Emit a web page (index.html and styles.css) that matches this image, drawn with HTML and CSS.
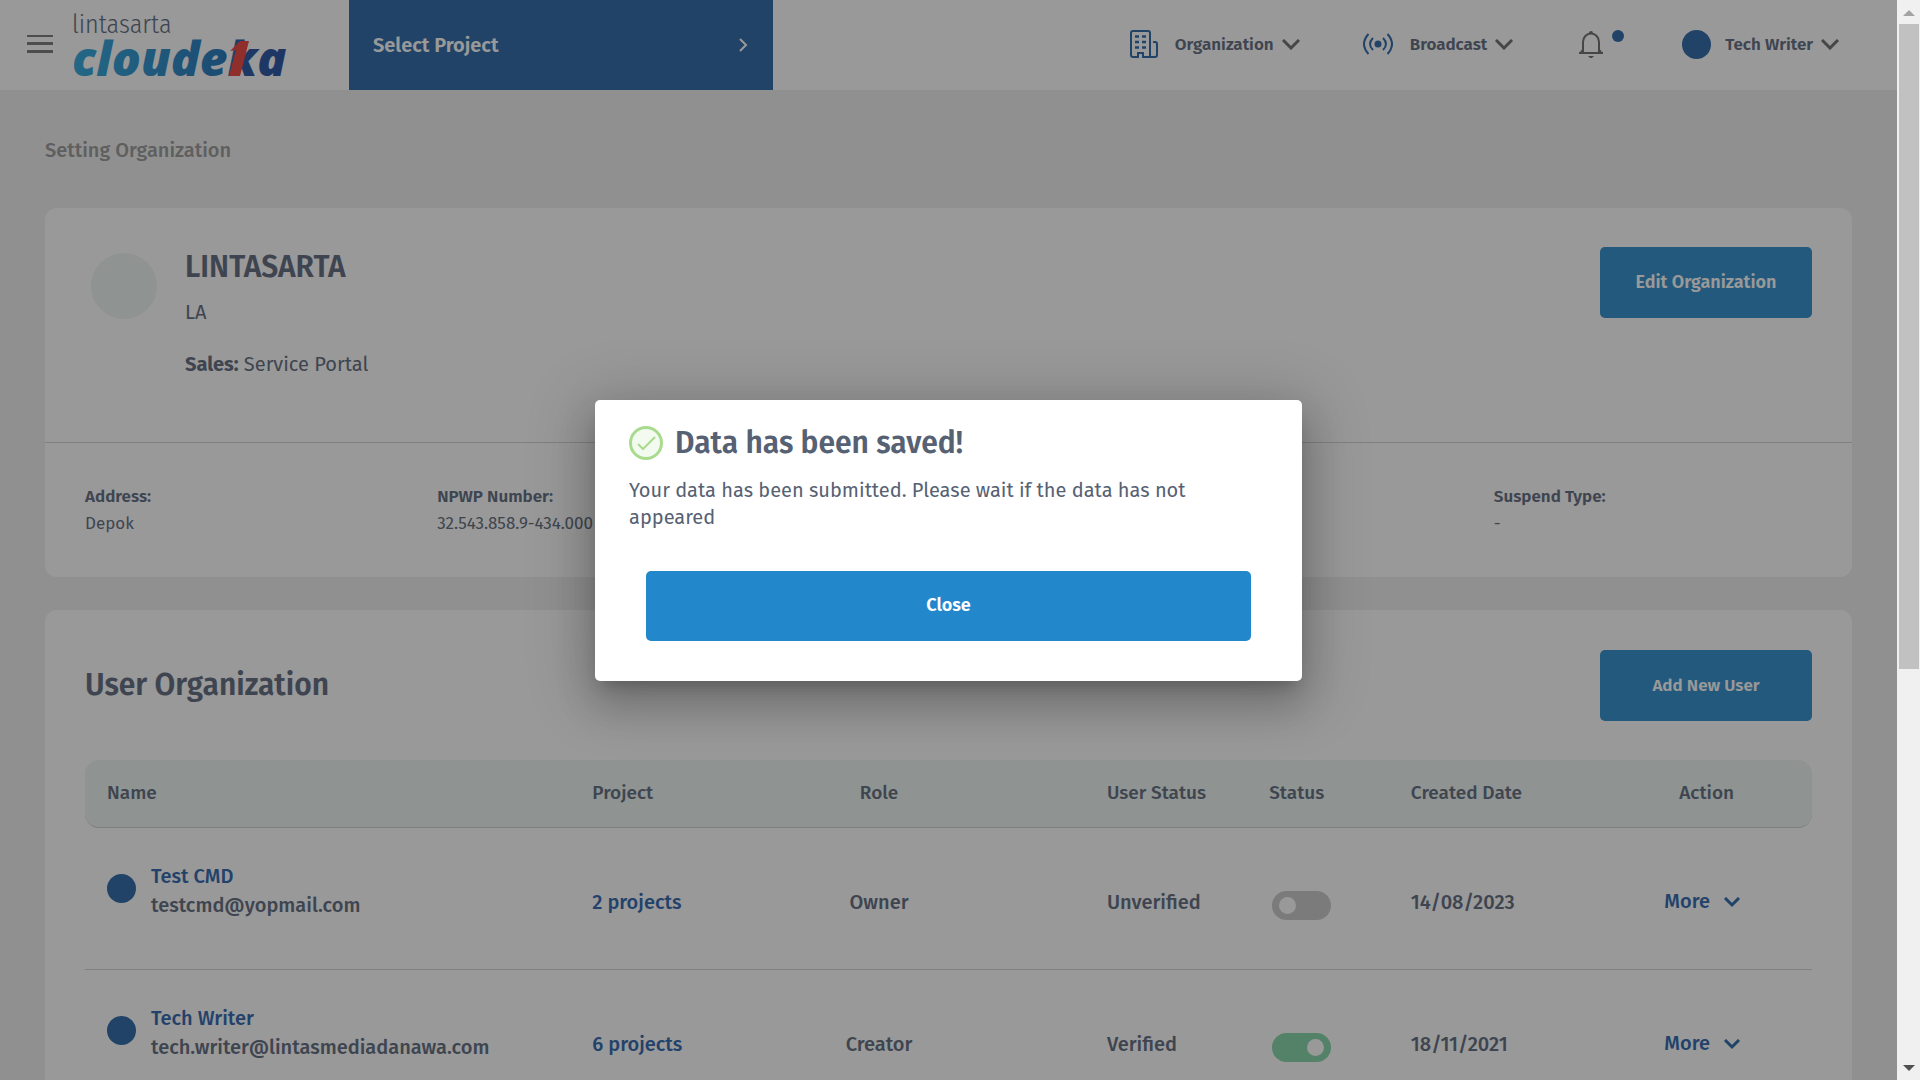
FILE: index.html
```html
<!DOCTYPE html>
<html lang="en">
<head>
    <meta charset="UTF-8">
    <meta name="viewport" content="width=device-width, initial-scale=1.0">
    <title>Setting Organization</title>
    <link rel="stylesheet" href="styles.css">
</head>
<body>
    <div class="page">
        <header class="topbar">
            <button class="menu-button" aria-label="Menu">
                <svg width="26" height="18" viewBox="0 0 26 18" fill="#808080"><path d="M0 0h26v2H0zM0 7h26v3H0zM0 15h26v3H0z"/></svg>
            </button>
            <a href="#" class="logo">
                <svg width="216" height="72" viewBox="0 0 216 72">
                    <defs>
                        <linearGradient id="brand" gradientUnits="userSpaceOnUse" x1="0" y1="0" x2="213" y2="0">
                            <stop offset="0" stop-color="#3caddf"/>
                            <stop offset="0.7" stop-color="#2f7fc0"/>
                            <stop offset="0.8" stop-color="#335fa8"/>
                            <stop offset="1" stop-color="#345aa8"/>
                        </linearGradient>
                    </defs>
                    <text x="-1" y="24" class="logo-small">lintasarta</text>
                    <text x="-1" y="67" class="logo-big" fill="url(#brand)">cloudeka</text>
                    <path d="M157 42l10-10h9l-9 35h-11l7-26z" fill="#ee4e48"/>
                </svg>
            </a>
            <button class="select-project">
                <span>Select Project</span>
                <svg width="10" height="14" viewBox="0 0 10 14" fill="none" stroke="currentColor" stroke-width="2"><path d="M1 1l6 6-6 6"/></svg>
            </button>
            <nav class="topnav">
                <button class="nav-item nav-org">
                    <svg class="blue" width="28" height="28" viewBox="0 0 28 28" fill="none" stroke="currentColor" stroke-width="2">
                        <path d="M13 27v-4H8v4H3a2 2 0 0 1-2-2V3a2 2 0 0 1 2-2h15a2 2 0 0 1 2 2v24h-7zM20 27h5a2 2 0 0 0 2-2V14a2 2 0 0 0-2-2h-2"/>
                        <path d="M5 6.500h4M12 6.500h4M5 12h4M12 12h4M5 17.500h4M12 17.500h4" stroke-width="2.500"/>
                    </svg>
                    <span>Organization</span>
                    <svg class="chev" width="18" height="11" viewBox="0 0 18 11"><path d="M1 1l8 8 8-8"/></svg>
                </button>
                <button class="nav-item nav-cast">
                    <svg class="blue" width="30" height="22" viewBox="0 0 30 22" fill="none" stroke="currentColor" stroke-width="2">
                        <circle cx="15" cy="11" r="3.500" fill="currentColor" stroke="none"/>
                        <path d="M10 5q-6 6 0 12M20 5q6 6 0 12M5.500 1q-9 10 0 20M24.500 1q9 10 0 20"/>
                    </svg>
                    <span>Broadcast</span>
                    <svg class="chev" width="18" height="11" viewBox="0 0 18 11"><path d="M1 1l8 8 8-8"/></svg>
                </button>
                <button class="nav-item nav-bell" aria-label="Notifications">
                    <svg width="24" height="28" viewBox="0 0 24 28" fill="none" stroke="#757575" stroke-width="2">
                        <path d="M0 23h24M4 23V12a8 8.500 0 0 1 16 0v11M2 22l2-2M22 22l-2-2"/>
                        <path d="M9 26h6l-2 2h-2zM10 3a2 2 0 0 1 4 0z" fill="#757575" stroke="none"/>
                    </svg>
                    <span class="bell-dot"></span>
                </button>
                <button class="nav-item">
                    <span class="avatar"></span>
                    <span>Tech Writer</span>
                    <svg class="chev" width="18" height="11" viewBox="0 0 18 11"><path d="M1 1l8 8 8-8"/></svg>
                </button>
            </nav>
        </header>

        <main>
            <p class="breadcrumb">Setting Organization</p>

            <section class="card">
                <div class="org-top">
                    <div class="org-logo"></div>
                    <div class="org-info">
                        <h1>LINTASARTA</h1>
                        <p class="org-code">LA</p>
                        <p><b>Sales:</b> Service Portal</p>
                    </div>
                    <button class="btn">Edit Organization</button>
                </div>
                <dl class="org-details">
                    <div>
                        <dt>Address:</dt>
                        <dd>Depok</dd>
                    </div>
                    <div>
                        <dt>NPWP Number:</dt>
                        <dd>32.543.858.9-434.000</dd>
                    </div>
                    <div class="last">
                        <dt>Suspend Type:</dt>
                        <dd>-</dd>
                    </div>
                </dl>
            </section>

            <section class="card users">
                <div class="users-head">
                    <h2>User Organization</h2>
                    <button class="btn btn-small">Add New User</button>
                </div>
                <table>
                    <thead>
                        <tr>
                            <th class="col-name">Name</th>
                            <th class="col-project">Project</th>
                            <th class="col-role">Role</th>
                            <th class="col-verified">User Status</th>
                            <th class="col-status">Status</th>
                            <th class="col-date">Created Date</th>
                            <th class="col-action">Action</th>
                        </tr>
                    </thead>
                    <tbody>
                        <tr>
                            <td>
                                <div class="user">
                                    <span class="avatar"></span>
                                    <div><a href="#">Test CMD</a><br>testcmd@yopmail.com</div>
                                </div>
                            </td>
                            <td><a href="#">2 projects</a></td>
                            <td class="col-role">Owner</td>
                            <td>Unverified</td>
                            <td class="col-status"><input type="checkbox" class="toggle" aria-label="Status of Test CMD"></td>
                            <td>14/08/2023</td>
                            <td class="col-action">
                                <button class="more">More <svg class="chev" width="18" height="11" viewBox="0 0 18 11"><path d="M2 1l7 7 7-7"/></svg></button>
                            </td>
                        </tr>
                        <tr>
                            <td>
                                <div class="user">
                                    <span class="avatar"></span>
                                    <div><a href="#">Tech Writer</a><br>tech.writer@lintasmediadanawa.com</div>
                                </div>
                            </td>
                            <td><a href="#">6 projects</a></td>
                            <td class="col-role">Creator</td>
                            <td>Verified</td>
                            <td class="col-status"><input type="checkbox" class="toggle" aria-label="Status of Tech Writer" checked></td>
                            <td>18/11/2021</td>
                            <td class="col-action">
                                <button class="more">More <svg class="chev" width="18" height="11" viewBox="0 0 18 11"><path d="M2 1l7 7 7-7"/></svg></button>
                            </td>
                        </tr>
                    </tbody>
                </table>
            </section>
        </main>

        <div class="overlay">
            <div class="modal" role="dialog" aria-labelledby="modal-title">
                <div class="modal-head">
                    <svg width="34" height="34" viewBox="0 0 34 34" fill="none" stroke="#a9db8f">
                        <circle cx="17" cy="17" r="15.500" fill="#f3faef" stroke-width="3"/>
                        <path d="M9 18l5 5 12-12" stroke-width="2"/>
                    </svg>
                    <h2 id="modal-title">Data has been saved!</h2>
                </div>
                <p>Your data has been submitted. Please wait if the data has not appeared</p>
                <button class="btn btn-close">Close</button>
            </div>
        </div>
    </div>

    <div class="scrollbar">
        <svg width="12" height="6" viewBox="0 0 12 6" fill="#a3a3a3"><path d="M0 6l6-6 6 6z"/></svg>
        <div class="thumb"></div>
        <svg width="12" height="6" viewBox="0 0 12 6" fill="#505050"><path d="M0 0l6 6 6-6z"/></svg>
    </div>
</body>
</html>
```

FILE: styles.css
```css
* {
    box-sizing: border-box;
}
body {
    margin: 0;
    display: flex;
    height: 100vh;
    overflow: hidden;
    font-family: "Fira Sans", "Noto Sans", sans-serif;
    font-size: 20px;
    color: #697385;
}
h1, h2, p, dl, dd {
    margin: 0;
}
button {
    font-family: inherit;
    border: none;
    background: none;
    color: inherit;
    padding: 0;
    cursor: pointer;
}
a {
    color: #3a6eb2;
    text-decoration: none;
}
.page {
    position: relative;
    flex: 1;
    overflow: hidden;
    background-color: #f0f0f0;
}

/* top bar */
.topbar {
    display: flex;
    align-items: center;
    height: 90px;
    background-color: #fff;
}
.menu-button {
    margin-left: 27px;
    padding-bottom: 2px;
    line-height: 0;
}
.logo {
    margin-left: 20px;
    width: 276px;
    line-height: 0;
}
.logo svg {
    overflow: visible;
}
.logo-small {
    font-family: "Fira Sans Condensed", "Fira Sans", "Noto Sans", sans-serif;
    font-size: 26px;
    font-weight: 300;
    fill: #697385;
}
.logo-big {
    font-family: "Open Sans", sans-serif;
    font-size: 48px;
    font-weight: 800;
    font-style: italic;
}
.select-project {
    display: flex;
    align-items: center;
    justify-content: space-between;
    width: 424px;
    height: 90px;
    padding: 0 24px;
    background-color: #3771ad;
    color: #fff;
    font-size: 20px;
    font-weight: 600;
}
.topnav {
    display: flex;
    align-items: center;
    margin-left: auto;
    margin-right: 58px;
    padding-bottom: 2px;
}
.nav-item {
    display: flex;
    align-items: center;
    font-size: 17px;
    font-weight: 600;
}
.nav-item .blue {
    margin-right: 17px;
    color: #3771ad;
}
.nav-org {
    margin-right: 63px;
}
.nav-cast {
    margin-right: 66px;
}
.nav-bell {
    align-items: flex-start;
    gap: 9px;
    margin-right: 58px;
}
.bell-dot {
    width: 12px;
    height: 12px;
    border-radius: 50%;
    background-color: #3771ad;
}
.chev {
    margin-left: 8px;
    fill: none;
    stroke: #757575;
    stroke-width: 3;
}
.avatar {
    flex: none;
    width: 29px;
    height: 29px;
    margin-right: 14px;
    border-radius: 50%;
    background-color: #3771ad;
}

/* content */
main {
    padding: 0 45px;
}
.breadcrumb {
    padding: 46px 0 44px;
    line-height: 28px;
    font-weight: 500;
    color: #9e9e9e;
}
.card {
    margin-bottom: 33px;
    border-radius: 12px;
    background-color: #fff;
}
.btn {
    width: 212px;
    height: 71px;
    padding-bottom: 2px;
    border-radius: 5px;
    background-color: #3a94cf;
    color: #fff;
    font-size: 18px;
    font-weight: 600;
}
.btn-small {
    padding-bottom: 0;
    font-size: 17px;
}
.org-top {
    display: flex;
    align-items: flex-start;
    height: 235px;
    padding: 39px 40px 0 46px;
    border-bottom: 1px solid #d8d8d8;
}
.org-logo {
    width: 66px;
    height: 66px;
    margin: 6px 28px 0 0;
    border-radius: 50%;
    background-color: #eef5f2;
}
.org-info {
    flex: 1;
    line-height: 28px;
}
h1, h2 {
    font-size: 30px;
    font-weight: 600;
    line-height: 40px;
}
.org-code {
    margin: 11px 0 24px;
}
.org-details {
    display: grid;
    grid-template-columns: repeat(5, 1fr);
    padding: 40px 6px 40px 40px;
    font-size: 17px;
    line-height: 27px;
}
.org-details dt {
    font-weight: 600;
}
.org-details .last {
    grid-column: 5;
}
.users {
    padding: 40px;
}
.users-head {
    display: flex;
    align-items: center;
    justify-content: space-between;
    margin-bottom: 39px;
}
.users-head h2 {
    padding-bottom: 2px;
}
table {
    width: 100%;
    table-layout: fixed;
    border-collapse: separate;
    border-spacing: 0;
}
th, td {
    padding: 0 0 0 22px;
    text-align: left;
    white-space: nowrap;
}
th {
    height: 68px;
    padding-bottom: 2px;
    background-color: #eef5f2;
    border-bottom: 1px solid #d0d4d2;
    font-size: 19px;
    font-weight: 500;
}
th:first-child {
    border-radius: 14px 0 0 14px;
}
th:last-child {
    border-radius: 0 14px 14px 0;
}
td {
    height: 142px;
    padding-top: 6px;
    border-bottom: 1px solid #d8d8d8;
    font-weight: 500;
}
.col-name {
    width: 28.1%;
}
.col-project {
    width: 10.3%;
}
.col-role {
    width: 19.5%;
    padding-left: 0;
    padding-right: 75px;
    text-align: center;
}
.col-verified {
    width: 9.4%;
}
.col-status {
    width: 8.2%;
}
.col-date {
    width: 12.3%;
}
.col-action {
    padding-left: 0;
    text-align: center;
}
td.col-action {
    padding-right: 8px;
    padding-top: 4px;
}
.user {
    display: flex;
    align-items: center;
    line-height: 29px;
    padding-bottom: 22px;
}
.user .avatar {
    margin: 0 15px 4px 0;
}
.toggle {
    appearance: none;
    display: flex;
    align-items: center;
    width: 59px;
    height: 29px;
    margin: 8px 0 0 3px;
    padding: 0 7px;
    border-radius: 15px;
    background-color: #cdcdcd;
}
.toggle::before {
    content: "";
    width: 17px;
    height: 17px;
    border-radius: 50%;
    background-color: #fff;
}
.toggle:checked {
    justify-content: flex-end;
    background-color: #8ad9ad;
}
.more {
    color: #3a6eb2;
    font-size: 20px;
    font-weight: 500;
}
.more .chev {
    stroke: #3771ad;
}

/* dialog */
.overlay {
    position: absolute;
    inset: 0;
    display: flex;
    align-items: center;
    justify-content: center;
    background-color: rgba(0, 0, 0, 0.4);
}
.modal {
    width: 707px;
    padding: 23px 34px 40px;
    border-radius: 5px;
    background-color: #fff;
    box-shadow: 0 11px 15px -7px rgba(0, 0, 0, 0.2), 0 24px 38px 3px rgba(0, 0, 0, 0.14), 0 9px 60px 12px rgba(0, 0, 0, 0.18);
    color: #566173;
}
.modal-head {
    display: flex;
    align-items: center;
    gap: 12px;
}
.modal p {
    margin: 14px 0 40px;
    line-height: 27px;
}
.btn-close {
    display: block;
    width: 605px;
    height: 70px;
    margin: 0 auto;
    background-color: #2388cb;
}

/* scrollbar */
.scrollbar {
    display: flex;
    flex-direction: column;
    align-items: center;
    width: 23px;
    padding: 10px 0 9px;
    background-color: #f0f0f0;
}
.thumb {
    width: 20px;
    height: 645px;
    margin: 8px 0 auto;
    background-color: #c1c1c1;
}
```
